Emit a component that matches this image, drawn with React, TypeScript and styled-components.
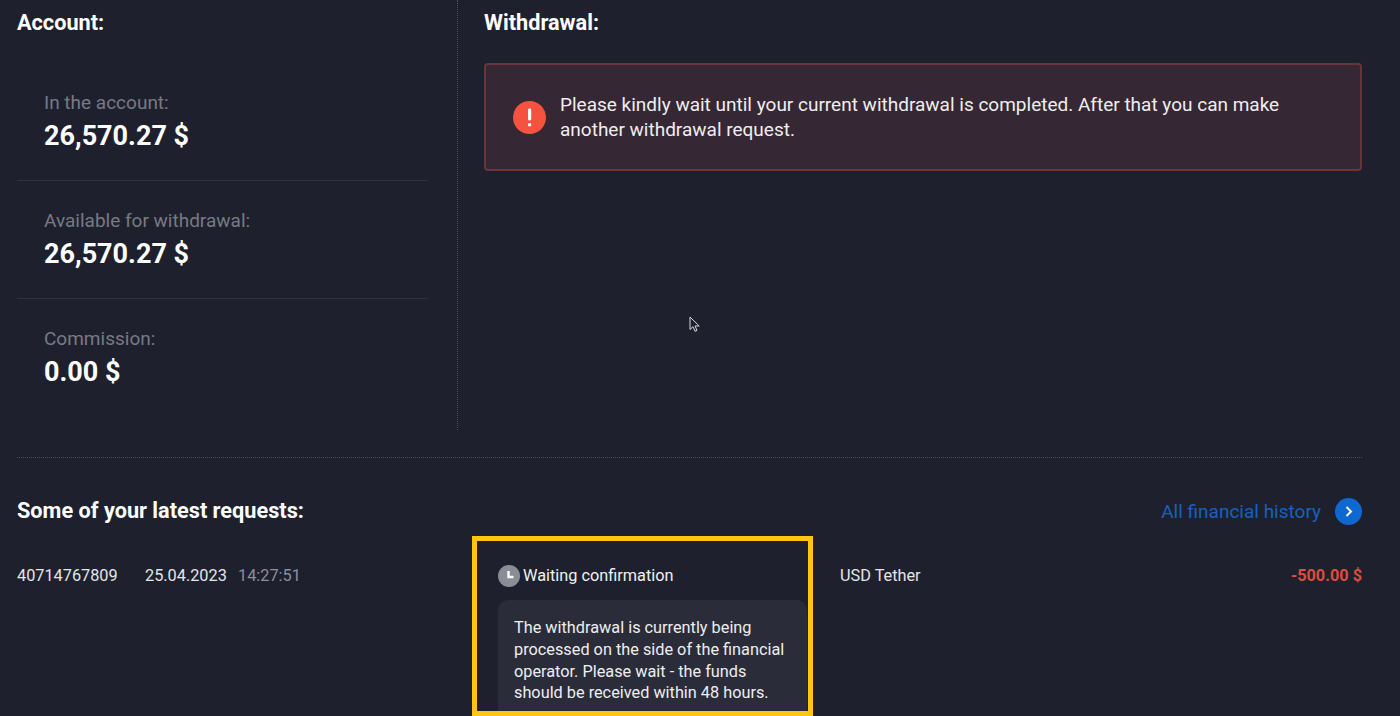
import styled, { createGlobalStyle } from "styled-components";

const GlobalStyle = createGlobalStyle`
  html, body {
    margin: 0;
    padding: 0;
    background: #1e212d;
  }
  * {
    box-sizing: border-box;
  }
`;

const Page = styled.div`
  position: relative;
  width: 1400px;
  height: 716px;
  overflow: hidden;
  background: #1e212d;
  color: #fff;
  font-family: Roboto, "Liberation Sans", sans-serif;
  padding: 0 38px 0 17px;
`;

const Top = styled.div`
  display: grid;
  grid-template-columns: 441px 1fr;
  height: 430px;
`;

const AccountColumn = styled.section`
  border-right: 1px dotted #4b4e5a;
  padding: 10px 29px 0 0;
`;

const WithdrawalColumn = styled.section`
  padding: 10px 0 0 26px;
`;

const Heading = styled.h2`
  margin: 0;
  font-size: 21.7px;
  line-height: 26px;
  font-weight: 700;
  color: #fff;
`;

const Stats = styled.div`
  margin-top: 27px;
`;

const Stat = styled.div<{ $last?: boolean }>`
  height: 118px;
  padding: 28px 0 0 27px;
  border-bottom: 1px solid ${(p) => (p.$last ? "transparent" : "#2f323d")};
`;

const StatLabel = styled.div`
  font-size: 19px;
  line-height: 24px;
  color: #777a84;
`;

const StatValue = styled.div`
  margin-top: 5px;
  font-size: 27px;
  line-height: 32px;
  font-weight: 700;
  color: #fff;
`;

const Alert = styled.div`
  display: flex;
  align-items: center;
  gap: 14px;
  height: 108px;
  margin-top: 27px;
  padding: 0 28px 0 27px;
  background: #352733;
  border: 2px solid #6e3239;
  border-radius: 4px;
`;

const AlertIcon = styled.svg`
  flex: none;
  width: 33px;
  height: 33px;
`;

const AlertText = styled.p`
  margin: 0;
  font-size: 19px;
  line-height: 25px;
  color: #eeeef0;
`;

const Divider = styled.div`
  height: 28px;
  border-bottom: 1px dotted #4b4e5a;
`;

const RequestsHeader = styled.div`
  display: flex;
  align-items: center;
  justify-content: space-between;
  height: 26px;
  margin-top: 40px;
`;

const HistoryLink = styled.a`
  display: flex;
  align-items: center;
  gap: 14px;
  font-size: 19px;
  color: #1561bd;
  text-decoration: none;
`;

const HistoryArrow = styled.svg`
  width: 27px;
  height: 27px;
`;

const Row = styled.div`
  display: flex;
  align-items: flex-start;
  margin-top: 12px;
  font-size: 16.3px;
`;

const RowText = styled.div<{ $width: number; $muted?: boolean; $gap?: number }>`
  flex: none;
  padding-top: 30px;
  line-height: 20px;
  margin-left: ${(p) => p.$gap ?? 0}px;
  color: ${(p) => (p.$muted ? "#8d8f98" : "#e4e5e8")};
  width: ${(p) => p.$width}px;
`;

const Amount = styled.div`
  flex: 1;
  padding-top: 30px;
  line-height: 20px;
  text-align: right;
  font-weight: 700;
  color: #dd4c3c;
`;

const StatusCell = styled.div`
  flex: none;
  width: 341px;
  height: 180px;
  border: 5px solid #fec514;
  padding: 24px 1px 0 21px;
  overflow: hidden;
`;

const StatusLine = styled.div`
  display: flex;
  align-items: center;
  gap: 3px;
  height: 22px;
  color: #f0f0f2;
  line-height: 22px;
`;

const ClockIcon = styled.svg`
  width: 22px;
  height: 22px;
`;

const Bubble = styled.div`
  margin-top: 13px;
  height: 130px;
  padding: 17px 14px 0 16px;
  border-radius: 10px;
  background: #2a2c39;
  line-height: 21.8px;
  color: #eeeef0;
`;

const Cursor = styled.svg`
  position: absolute;
  left: 689px;
  top: 316px;
  width: 12px;
  height: 17px;
`;

export default function App() {
  return (
    <Page>
      <GlobalStyle />
      <Top>
        <AccountColumn>
          <Heading>Account:</Heading>
          <Stats>
            <Stat>
              <StatLabel>In the account:</StatLabel>
              <StatValue>26,570.27 $</StatValue>
            </Stat>
            <Stat>
              <StatLabel>Available for withdrawal:</StatLabel>
              <StatValue>26,570.27 $</StatValue>
            </Stat>
            <Stat $last>
              <StatLabel>Commission:</StatLabel>
              <StatValue>0.00 $</StatValue>
            </Stat>
          </Stats>
        </AccountColumn>
        <WithdrawalColumn>
          <Heading>Withdrawal:</Heading>
          <Alert>
            <AlertIcon viewBox="0 0 33 33">
              <circle cx="16.5" cy="16.5" r="16.5" fill="#f5533f" />
              <rect x="15" y="7.5" width="3.2" height="12" rx="1.4" fill="#fff" />
              <rect x="15" y="22" width="3.2" height="3.2" rx="0.8" fill="#fff" />
            </AlertIcon>
            <AlertText>
              Please kindly wait until your current withdrawal is completed. After that you can make
              another withdrawal request.
            </AlertText>
          </Alert>
        </WithdrawalColumn>
      </Top>
      <Divider />
      <RequestsHeader>
        <Heading>Some of your latest requests:</Heading>
        <HistoryLink>
          All financial history
          <HistoryArrow viewBox="0 0 27 27">
            <circle cx="13.5" cy="13.5" r="13.5" fill="#0f68d2" />
            <path d="M11.5 9l4.5 4.5-4.5 4.5" fill="none" stroke="#fff" strokeWidth="2" />
          </HistoryArrow>
        </HistoryLink>
      </RequestsHeader>
      <Row>
        <RowText $width={128}>40714767809</RowText>
        <RowText $width={93}>25.04.2023</RowText>
        <RowText $width={234} $muted>14:27:51</RowText>
        <StatusCell>
          <StatusLine>
            <ClockIcon viewBox="0 0 22 22">
              <circle cx="11" cy="11" r="11" fill="#8b8d96" />
              <path d="M10.5 6v6h5" fill="none" stroke="#fff" strokeWidth="2.4" />
            </ClockIcon>
            Waiting confirmation
          </StatusLine>
          <Bubble>
            The withdrawal is currently being processed on the side of the financial operator.
            Please wait - the funds should be received within 48 hours.
          </Bubble>
        </StatusCell>
        <RowText $width={200} $gap={27}>USD Tether</RowText>
        <Amount>-500.00 $</Amount>
      </Row>
      <Cursor viewBox="0 0 12 17">
        <path d="M1 1v12.5l3-2.8 2 4.6 2-.9-2-4.4h4.2z" fill="#1e212d" stroke="#d8d8dc" strokeWidth="1" />
      </Cursor>
    </Page>
  );
}
